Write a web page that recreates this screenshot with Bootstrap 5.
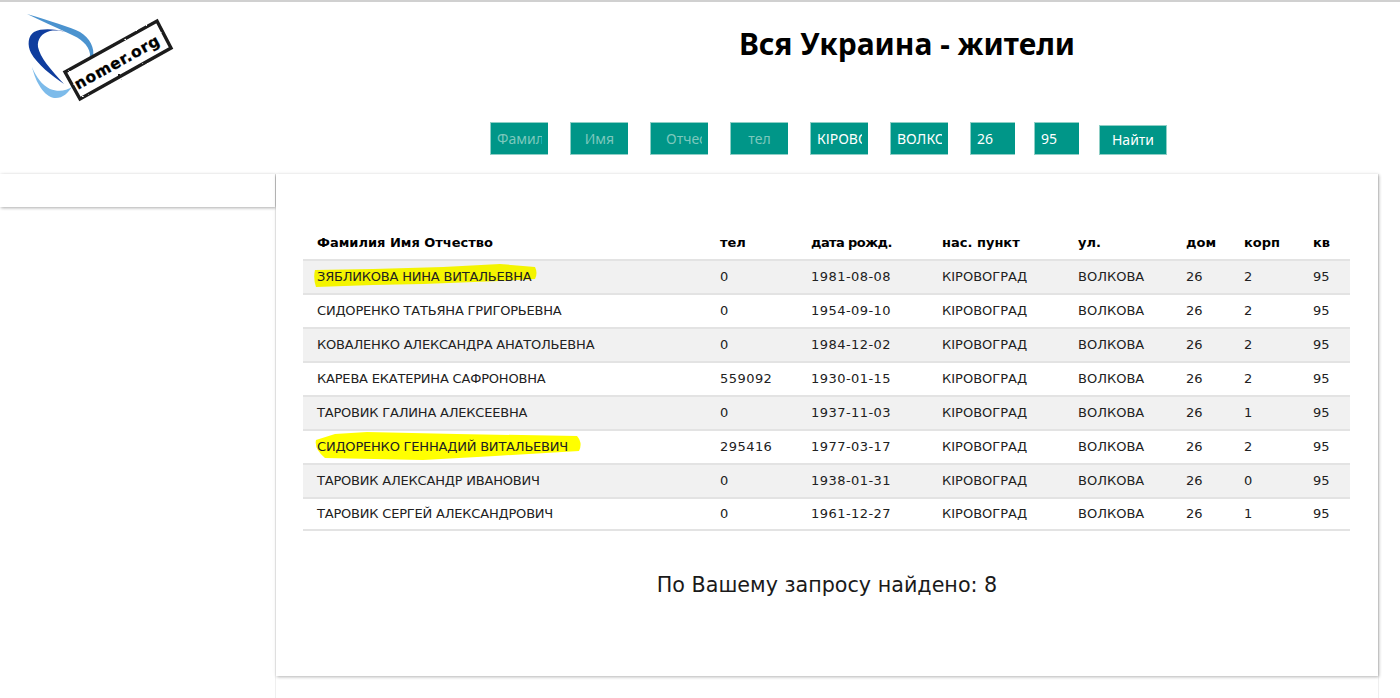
<!DOCTYPE html>
<html lang="ru">
<head>
<meta charset="utf-8">
<title>Вся Украина - жители</title>
<link href="https://cdn.jsdelivr.net/npm/bootstrap@5.3.0/dist/css/bootstrap.min.css" rel="stylesheet">
<style>
html,body{height:698px;overflow:hidden}
body{font-family:"DejaVu Sans",sans-serif;background:#fff;color:#212121;border-top:2px solid #d0d0d0}
.top-band{height:172px}
.logo-box{width:190px;flex:none}
.logo-box svg{display:block;margin:9px 0 0 24px}
.page-title{font-family:"Noto Sans",sans-serif;font-weight:700;font-size:30px;color:#000;text-align:center;margin:24px 0 0;line-height:36px;padding-left:224px}
.hdr-main{width:1210px}
.search-form{margin:60px 0 0 300px;gap:22px;height:34px}
.search-form .form-control{font-family:"Noto Sans",sans-serif;width:58px;height:33px;flex:none;border-radius:0;border:1px solid #8fcfc6;border-width:1px 0 1px 1px;background:#009688;color:#fff;font-size:14px;padding:0 6px;box-shadow:none}
.search-form .form-control::placeholder{color:#7dc8bd;opacity:1}
.search-form .fld-c{text-align:center}
.search-form .fld-o{padding-left:15px}
.search-form .fld-s{width:45px;margin-right:-3px}
.search-form .go-btn{font-family:"Noto Sans",sans-serif;width:68px;height:30px;margin:3px 0 0 1px;border-radius:0;border:1px solid #8fcfc6;background:#009688;color:#fff;font-size:14px;padding:0;line-height:28px}
.layout-row{height:524px}
.side-wrap{width:276px;height:100%;flex:none;border-right:1px solid #efefef}
.side-col{width:275px;height:33px;background:#fff;box-shadow:1px 1px 3px rgba(0,0,0,.3),0 0 5px rgba(0,0,0,.04)}
.main-wrap{width:1103px;height:100%;flex:none;border-right:1px solid #efefef}
.main-panel{width:1102px;height:502px;padding:53px 27px 0 27px;background:#fff;box-shadow:1px 1px 3px rgba(0,0,0,.27),0 0 5px rgba(0,0,0,.05)}
.res-table{table-layout:fixed;width:1047px;margin:0;font-size:13px;--bs-table-bg:transparent;--bs-table-striped-bg:#f1f1f1;--bs-table-color:#212121;--bs-table-striped-color:#212121;--bs-table-border-color:#ddd}
.res-table th,.res-table td{padding:0 0 0 14px;height:34px;line-height:32px;white-space:nowrap;vertical-align:middle;border-bottom:0;border-top:2px solid #e3e3e3;font-weight:400}
.res-table thead th{border-top:0;font-weight:700;color:#000;height:32px;line-height:32px;font-size:13px}
.res-table thead th.th-d{letter-spacing:-.6px}
.res-table tbody tr:last-child td{border-bottom:2px solid #e3e3e3;height:32px;line-height:30px}
.res-table tbody tr:nth-of-type(odd)>*{background:#f1f1f1;box-shadow:none}
.res-table td:first-child{letter-spacing:-.2px}
.res-table td:nth-child(2),.res-table td:nth-child(3){letter-spacing:.45px}
.name-wrap{position:relative;display:inline-block;z-index:0}
.hl{position:absolute;z-index:-1;pointer-events:none;display:block}
.hl-a{left:-4px;top:3px}
.hl-b{left:-2px;top:0}
.result-count{font-size:20.7px;color:#1a1a1a;text-align:center;margin:41px 0 0;line-height:26px}
</style>
</head>
<body>
<div class="top-band d-flex">
  <div class="logo-box">
    <svg width="155" height="92" viewBox="24 10 155 92" xmlns="http://www.w3.org/2000/svg" role="img" aria-label="nomer.org">
      <defs><filter id="rough" x="-10%" y="-20%" width="120%" height="140%"><feTurbulence type="fractalNoise" baseFrequency="0.22" numOctaves="2" seed="4"/><feDisplacementMap in="SourceGraphic" scale="2"/></filter></defs>
      <path fill="#4b93cf" d="M27 13C50 20 70 26 80 31C90 37 95 47 93 57C91 64 87 70 80 76C86 68 90 60 90 53C89 44 80 37 70 33C55 26 40 19 27 13Z"/>
      <path fill="#0f3d9e" d="M66 31C55 28 42 27 34 31C28 35 27 44 31 52C37 63 52 75 64 83C50 68 40 56 38 46C37 38 42 32 50 30C56 29 62 30 66 31Z"/>
      <path fill="#7dbbea" d="M32 66C36 76 42 84 50 88C58 91 66 90 72 86C68 92 62 98 54 97C44 95 36 82 32 66Z"/>
      <polygon points="65,71 157,20 171,47 80,98" fill="#fff" stroke="#1c1c1c" stroke-width="3.4" filter="url(#rough)"/>
      <text transform="translate(78 89) rotate(-29)" font-family="'DejaVu Sans',sans-serif" font-weight="700" font-size="15.5" fill="#000" stroke="#000" stroke-width=".3" letter-spacing=".7">nomer.org</text>
    </svg>
  </div>
  <div class="hdr-main">
    <h1 class="page-title">Вся Украина - жители</h1>
    <form class="search-form d-flex align-items-start">
      <input class="form-control" placeholder="Фамилия">
      <input class="form-control fld-c" placeholder="Имя">
      <input class="form-control fld-o" placeholder="Отчество">
      <input class="form-control fld-c" placeholder="тел">
      <input class="form-control" value="КІРОВОГРАД">
      <input class="form-control" value="ВОЛКОВА">
      <input class="form-control fld-s" value="26">
      <input class="form-control fld-s" value="95">
      <button type="button" class="btn go-btn">Найти</button>
    </form>
  </div>
</div>
<div class="layout-row d-flex align-items-start">
  <div class="side-wrap"><div class="side-col"></div></div>
  <div class="main-wrap">
  <div class="main-panel">
    <table class="table table-striped res-table">
      <colgroup><col style="width:403px"><col style="width:91px"><col style="width:131px"><col style="width:136px"><col style="width:108px"><col style="width:58px"><col style="width:69px"><col style="width:51px"></colgroup>
      <thead><tr><th>Фамилия Имя Отчество</th><th>тел</th><th class="th-d">дата рожд.</th><th>нас. пункт</th><th>ул.</th><th>дом</th><th>корп</th><th>кв</th></tr></thead>
      <tbody>
        <tr><td><span class="name-wrap"><svg class="hl hl-a" width="226" height="24" viewBox="0 0 226 24"><path fill="#f4f400" d="M2 6L60 5L130 3L187 0L222 3Q225 9 222 15L187 17L110 20L60 21L3 23Q0 14 2 6Z"/></svg>ЗЯБЛИКОВА НИНА ВИТАЛЬЕВНА</span></td><td>0</td><td>1981-08-08</td><td>КІРОВОГРАД</td><td>ВОЛКОВА</td><td>26</td><td>2</td><td>95</td></tr>
        <tr><td>СИДОРЕНКО ТАТЬЯНА ГРИГОРЬЕВНА</td><td>0</td><td>1954-09-10</td><td>КІРОВОГРАД</td><td>ВОЛКОВА</td><td>26</td><td>2</td><td>95</td></tr>
        <tr><td>КОВАЛЕНКО АЛЕКСАНДРА АНАТОЛЬЕВНА</td><td>0</td><td>1984-12-02</td><td>КІРОВОГРАД</td><td>ВОЛКОВА</td><td>26</td><td>2</td><td>95</td></tr>
        <tr><td>КАРЕВА ЕКАТЕРИНА САФРОНОВНА</td><td>559092</td><td>1930-01-15</td><td>КІРОВОГРАД</td><td>ВОЛКОВА</td><td>26</td><td>2</td><td>95</td></tr>
        <tr><td>ТАРОВИК ГАЛИНА АЛЕКСЕЕВНА</td><td>0</td><td>1937-11-03</td><td>КІРОВОГРАД</td><td>ВОЛКОВА</td><td>26</td><td>1</td><td>95</td></tr>
        <tr><td><span class="name-wrap"><svg class="hl hl-b" width="268" height="30" viewBox="0 0 268 30"><path fill="#ffff00" d="M1 9L20 3L52 1L142 3L262 5Q268 12 264 20L180 25L108 29L10 27Q-1 18 1 9Z"/></svg>СИДОРЕНКО ГЕННАДИЙ ВИТАЛЬЕВИЧ</span></td><td>295416</td><td>1977-03-17</td><td>КІРОВОГРАД</td><td>ВОЛКОВА</td><td>26</td><td>2</td><td>95</td></tr>
        <tr><td>ТАРОВИК АЛЕКСАНДР ИВАНОВИЧ</td><td>0</td><td>1938-01-31</td><td>КІРОВОГРАД</td><td>ВОЛКОВА</td><td>26</td><td>0</td><td>95</td></tr>
        <tr><td>ТАРОВИК СЕРГЕЙ АЛЕКСАНДРОВИЧ</td><td>0</td><td>1961-12-27</td><td>КІРОВОГРАД</td><td>ВОЛКОВА</td><td>26</td><td>1</td><td>95</td></tr>
      </tbody>
    </table>
    <p class="result-count">По Вашему запросу найдено: 8</p>
  </div>
  </div>
</div>
<script src="https://cdn.jsdelivr.net/npm/bootstrap@5.3.0/dist/js/bootstrap.bundle.min.js"></script>
</body>
</html>
